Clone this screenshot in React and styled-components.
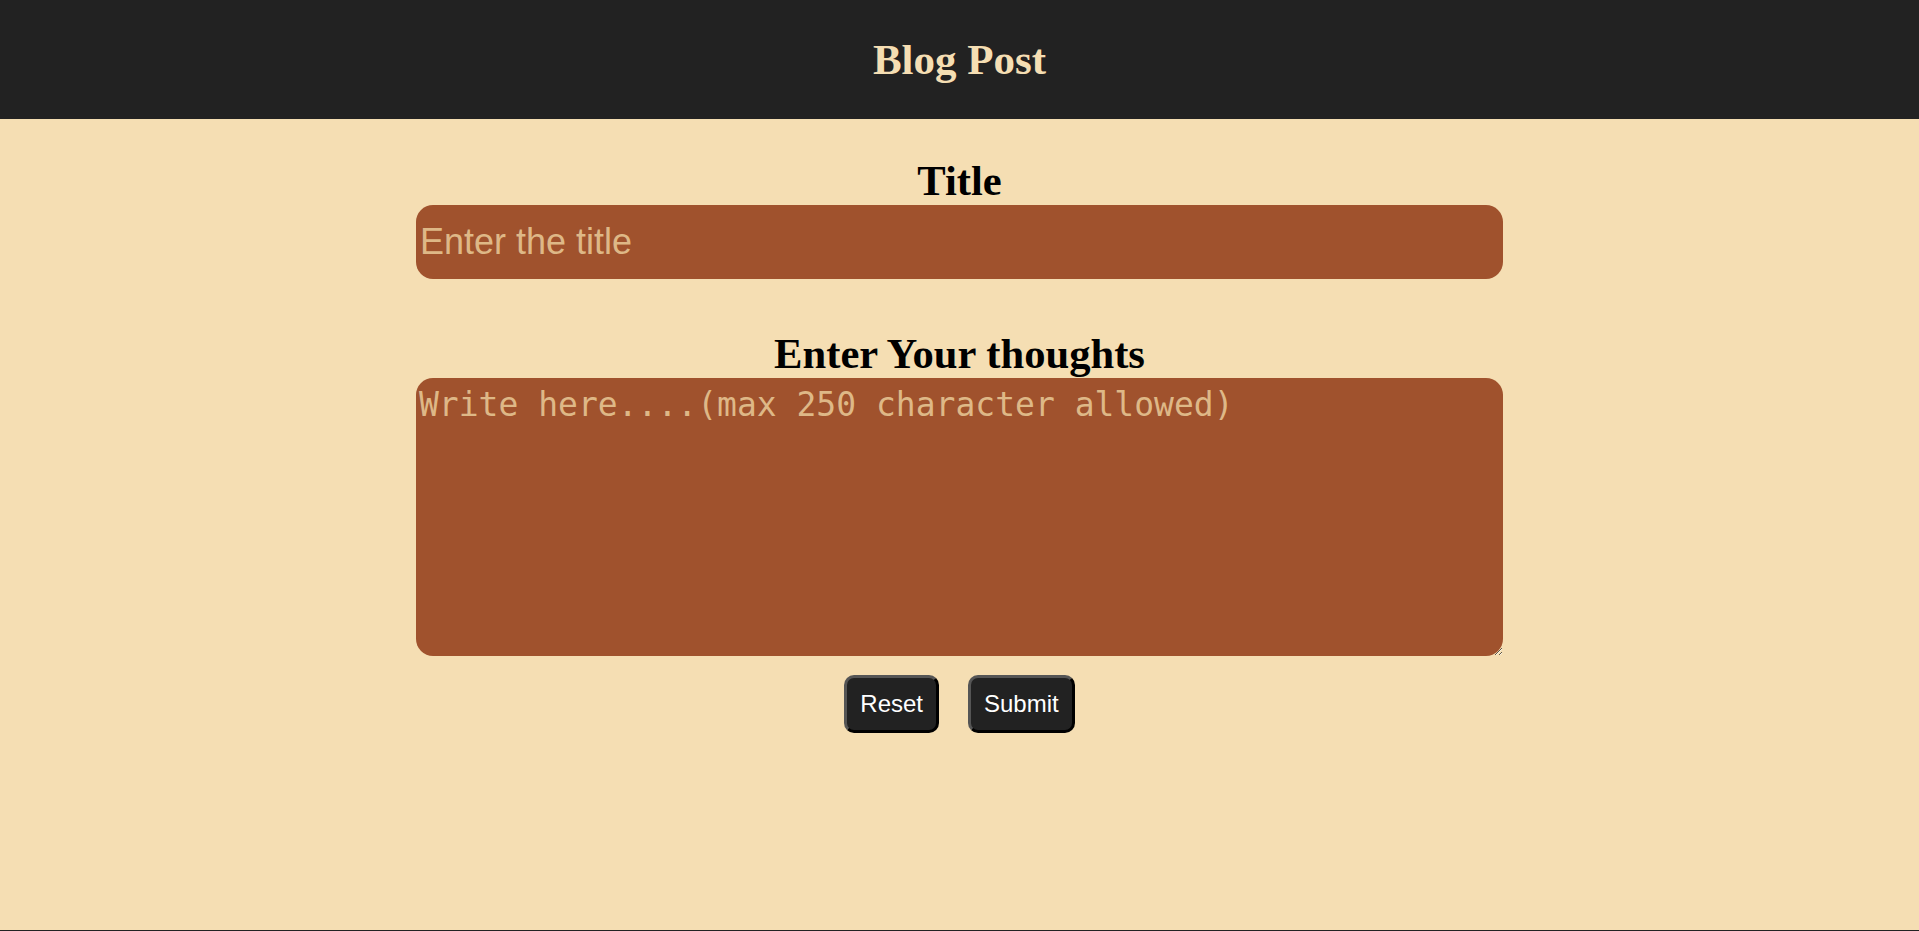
import React from 'react'
import styled, { createGlobalStyle } from 'styled-components'

const GlobalStyle = createGlobalStyle`
  html, body {
    margin: 0;
    padding: 0;
    background: #F5DEB3;
  }
  * { box-sizing: border-box; }
`

export default function App() {
  return (
    <Page>
      <GlobalStyle />
      <Header>
        <Brand>Blog Post</Brand>
      </Header>
      <Main>
        <Form onSubmit={e => e.preventDefault()}>
          <Label htmlFor="title">Title</Label>
          <TitleInput id="title" type="text" placeholder="Enter the title" />
          <Label htmlFor="thoughts" $spaced>Enter Your thoughts</Label>
          <Thoughts id="thoughts" maxLength={250} placeholder="Write here....(max 250 character allowed)" />
          <ButtonGroup>
            <Button type="reset">Reset</Button>
            <Button type="submit">Submit</Button>
          </ButtonGroup>
        </Form>
      </Main>
      <Footer />
    </Page>
  )
}

const Page = styled.div`
  display: flex;
  flex-direction: column;
  min-height: 100vh;
`
const Header = styled.header`
  background-color: #222;
  height: 119px;
  display: flex;
  align-items: center;
  justify-content: center;
`
const Brand = styled.h1`
  margin: 0;
  font-family: 'Liberation Serif', 'Times New Roman', serif;
  font-weight: bold;
  font-size: 43px;
  color: #F5DEB3;
`
const Main = styled.main`
  flex: 1;
  display: flex;
  justify-content: center;
  padding-top: 37px;
`
const Form = styled.form`
  width: 1087px;
  display: flex;
  flex-direction: column;
  align-items: stretch;
`
const Label = styled.label`
  display: block;
  text-align: center;
  font-family: 'Liberation Serif', 'Times New Roman', serif;
  font-weight: bold;
  font-size: 42.6px;
  line-height: 49px;
  color: #000;
  margin-top: ${p => (p.$spaced ? '50px' : '0')};
`
const TitleInput = styled.input`
  height: 74px;
  border: none;
  border-radius: 17px;
  padding: 0 4px;
  background-color: #A0522D;
  color: #F5DEB3;
  font-family: 'Liberation Sans', Arial, sans-serif;
  font-size: 36px;
  outline: none;
  &::placeholder {
    color: #DEB887;
  }
`
const Thoughts = styled.textarea`
  display: block;
  height: 278px;
  border: none;
  border-radius: 17px;
  padding: 7px 3px;
  background-color: #A0522D;
  color: #F5DEB3;
  font-family: 'DejaVu Sans Mono', monospace;
  font-size: 33px;
  outline: none;
  &::placeholder {
    color: #DEB887;
  }
`
const ButtonGroup = styled.div`
  display: flex;
  justify-content: center;
  gap: 29px;
  margin-top: 19px;
`
const Button = styled.button`
  background-color: #222;
  color: white;
  font-family: 'Liberation Sans', Arial, sans-serif;
  font-size: 24px;
  line-height: 28px;
  padding: 12px 13px;
  border-style: solid;
  border-width: 3px;
  border-color: #555 #000 #000 #555;
  border-radius: 10px;
  cursor: pointer;
`
const Footer = styled.footer`
  height: 1px;
  background-color: #222;
`
